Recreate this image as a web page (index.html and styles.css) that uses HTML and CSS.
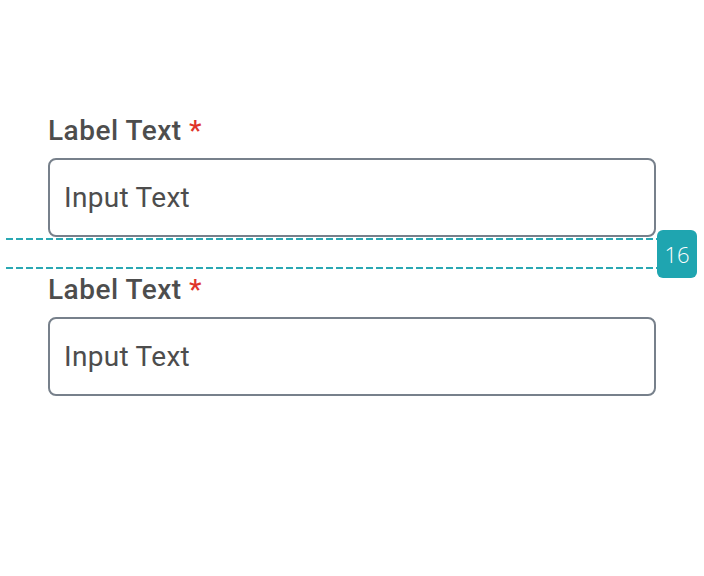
FILE: index.html
```html
<!DOCTYPE html>
<html>
<head>
<meta charset="utf-8">
<link rel="stylesheet" href="styles.css">
</head>
<body>
<div class="form">
  <div class="field">
    <div class="label">Label Text <span class="req">*</span></div>
    <div class="input">Input Text</div>
  </div>
  <div class="gap">
    <div class="marker">
      <div class="dash"></div>
      <div class="dash"></div>
    </div>
    <div class="badge">16</div>
  </div>
  <div class="field">
    <div class="label">Label Text <span class="req">*</span></div>
    <div class="input">Input Text</div>
  </div>
</div>
</body>
</html>
```
FILE: styles.css
```css
html, body {
  margin: 0;
  background: #ffffff;
}
body {
  width: 704px;
  height: 576px;
  font-family: Roboto, "Liberation Sans", sans-serif;
}
.form {
  padding: 113px 0 0 48px;
  width: 608px;
}
.field {
  display: flex;
  flex-direction: column;
  gap: 9px;
}
.label {
  font-size: 28px;
  line-height: 36px;
  font-weight: 500;
  letter-spacing: 0.5px;
  color: #4d4d4d;
}
.req {
  color: #e0342a;
  letter-spacing: 0;
}
.input {
  box-sizing: border-box;
  height: 79px;
  border: 2px solid #77808b;
  border-radius: 8px;
  padding-left: 14px;
  display: flex;
  align-items: center;
  font-size: 28px;
  line-height: 36px;
  letter-spacing: 0.3px;
  color: #4d4d4d;
}
.gap {
  height: 35px;
  position: relative;
}
.marker {
  position: absolute;
  left: -42px;
  top: 1px;
  width: 651px;
  height: 31px;
  display: flex;
  flex-direction: column;
  justify-content: space-between;
}
.dash {
  height: 2px;
  background: repeating-linear-gradient(to right, #2aa8b3 0 7px, transparent 7px 10px);
}
.badge {
  position: absolute;
  left: 609px;
  top: -7px;
  width: 40px;
  height: 48px;
  border-radius: 6px;
  background: #1fa5b0;
  color: #ffffff;
  font-family: "Open Sans", "Noto Sans", sans-serif;
  font-size: 22px;
  font-weight: 300;
  display: flex;
  align-items: center;
  justify-content: center;
}
```
